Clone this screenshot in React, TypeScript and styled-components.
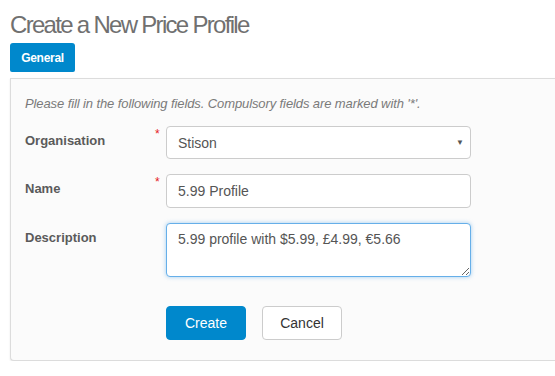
import styled, { createGlobalStyle } from "styled-components";

const GlobalStyle = createGlobalStyle`
	html, body {
		margin: 0;
		padding: 0;
		background: #fff;
		font-family: "Liberation Sans", Arial, sans-serif;
		overflow: hidden;
	}
`;

export default function App() {
	return (
		<Page>
			<GlobalStyle />
			<Title>Create a New Price Profile</Title>
			<Tabs>
				<Tab>General</Tab>
			</Tabs>
			<Panel>
				<Hint>Please fill in the following fields. Compulsory fields are marked with '*'.</Hint>
				<Form>
					<Row>
						<Label>Organisation</Label>
						<Required $on>*</Required>
						<SelectBox>
							<span>Stison</span>
							<Caret>▼</Caret>
						</SelectBox>
					</Row>
					<Row>
						<Label>Name</Label>
						<Required $on>*</Required>
						<Input defaultValue="5.99 Profile" />
					</Row>
					<Row>
						<Label>Description</Label>
						<Required />
						<Textarea defaultValue="5.99 profile with $5.99, £4.99, €5.66" />
					</Row>
					<Actions>
						<Button $primary>Create</Button>
						<Button>Cancel</Button>
					</Actions>
				</Form>
			</Panel>
		</Page>
	);
}

const Page = styled.div`
	padding: 10px 0 0 10px;
`;

const Title = styled.h1`
	margin: 0;
	font-size: 24px;
	font-weight: normal;
	letter-spacing: -1.7px;
	line-height: 30px;
	color: #707070;
`;

const Tabs = styled.div`
	display: flex;
	margin-top: 3px;
	height: 35px;
`;

const Tab = styled.div`
	width: 65px;
	height: 29px;
	background: #0088cc;
	color: #fff;
	font-size: 12px;
	font-weight: bold;
	letter-spacing: -0.3px;
	border-radius: 3px 3px 2px 2px;
	display: flex;
	align-items: center;
	justify-content: center;
`;

const Panel = styled.div`
	background: #fbfbfb;
	border: 1px solid #dcdcdc;
	border-right: none;
	border-radius: 0 0 0 4px;
	box-shadow: 0 1px 2px rgba(0, 0, 0, 0.1);
	padding: 17px 0 19px 14px;
	box-sizing: border-box;
	height: 283px;
`;

const Hint = styled.p`
	margin: 0;
	font-size: 13px;
	font-style: italic;
	color: #7a7a7a;
	line-height: 16px;
	letter-spacing: -0.1px;
`;

const Form = styled.div`
	margin-top: 14px;
	display: flex;
	flex-direction: column;
	gap: 15px;
`;

const Row = styled.div`
	display: grid;
	grid-template-columns: 130px 11px 305px;
	align-items: start;
`;

const Label = styled.label`
	font-size: 13px;
	font-weight: bold;
	color: #5a5a5a;
	padding-top: 7px;
`;

const Required = styled.span<{ $on?: boolean }>`
	color: #e51c23;
	font-size: 12px;
	line-height: 12px;
	padding-top: 2px;
	visibility: ${(p) => (p.$on ? "visible" : "hidden")};
`;

const fieldBase = `
	box-sizing: border-box;
	width: 305px;
	border: 1px solid #cccccc;
	border-radius: 4px;
	background: #fff;
	font-family: "Liberation Sans", Arial, sans-serif;
	font-size: 14px;
	color: #555;
	padding: 0 11px;
`;

const SelectBox = styled.div`
	${fieldBase}
	height: 33px;
	display: flex;
	align-items: center;
	justify-content: space-between;
	padding-right: 6px;
`;

const Caret = styled.span`
	font-size: 8px;
	color: #555;
`;

const Input = styled.input`
	${fieldBase}
	height: 34px;
	outline: none;
`;

const Textarea = styled.textarea`
	${fieldBase}
	height: 54px;
	padding-top: 7px;
	border-color: #66afe9;
	box-shadow: 0 0 4px rgba(102, 175, 233, 0.6);
	outline: none;
	resize: vertical;
`;

const Actions = styled.div`
	display: flex;
	gap: 16px;
	margin-left: 141px;
	margin-top: 14px;
`;

const Button = styled.button<{ $primary?: boolean }>`
	width: 80px;
	height: 34px;
	border-radius: 4px;
	font-family: "Liberation Sans", Arial, sans-serif;
	font-size: 14px;
	cursor: pointer;
	background: ${(p) => (p.$primary ? "#0088cc" : "#fff")};
	color: ${(p) => (p.$primary ? "#fff" : "#333")};
	border: 1px solid ${(p) => (p.$primary ? "#0088cc" : "#cccccc")};
`;
